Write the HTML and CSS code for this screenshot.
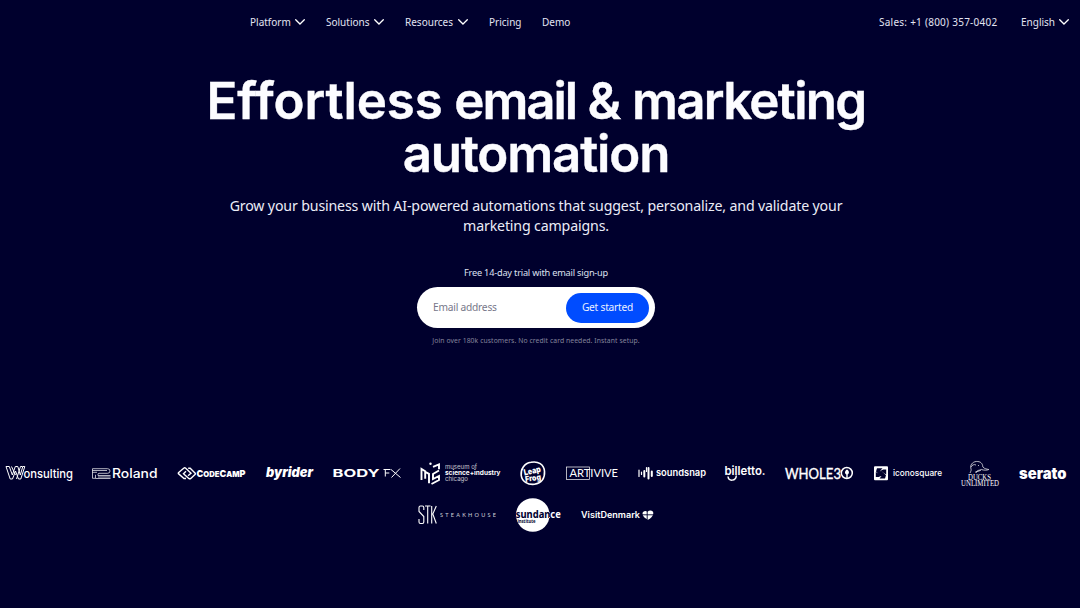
FILE: index.html
```html
<!DOCTYPE html>
<html lang="en">
<head>
<meta charset="utf-8">
<title>Effortless email &amp; marketing automation</title>
<link rel="stylesheet" href="styles.css">
</head>
<body>
<header class="topbar">
  <nav class="menu">
    <a class="item platform">Platform <svg class="chev" viewBox="0 0 10 6"><path d="M.7.8 5 5 9.300.8"/></svg></a>
    <a class="item solutions">Solutions <svg class="chev" viewBox="0 0 10 6"><path d="M.7.8 5 5 9.300.8"/></svg></a>
    <a class="item resources">Resources <svg class="chev" viewBox="0 0 10 6"><path d="M.7.8 5 5 9.300.8"/></svg></a>
    <a class="item pricing">Pricing</a>
    <a class="item demo">Demo</a>
  </nav>
  <div class="side">
    <a class="item sales">Sales: +1 (800) 357-0402</a>
    <a class="item lang">English <svg class="chev" viewBox="0 0 10 6"><path d="M.7.8 5 5 9.300.8"/></svg></a>
  </div>
</header>
<main class="hero">
  <h1 class="title"><span class="loose">Effortless</span> <span class="tight">email</span> &amp; <span class="snug">marketing</span><br>automation</h1>
  <p class="lead">Grow your business with AI-powered automations that suggest, personalize, and validate your<br>marketing campaigns.</p>
  <p class="trial">Free 14-day trial with email sign-up</p>
  <form class="signup"><span class="email">Email address</span><button class="cta" type="button">Get started</button></form>
  <p class="note">Join over 180k customers. No credit card needed. Instant setup.</p>
</main>
<section class="logos">
  <div class="row">
    <svg class="logo" width="68" height="34" viewBox="5 456 68 34">
      <path class="ln" stroke-linejoin="round" d="M6 466.500h3.300l3 8.500 3-8.500h2.500l2.500 8.500 2.500-8.500h2L20.800 479h-2.300l-3-8-3 8h-2.300zM11.500 466.500l4 8.500M16.500 479l4-12.500h2"/>
      <text class="inter m" x="23.500" y="478.300" font-size="12" textLength="49.500" lengthAdjust="spacingAndGlyphs">onsulting</text>
    </svg>
    <svg class="logo" width="66" height="34" viewBox="92 456 66 34">
      <path class="ln thin" d="M92.500 468.700h15q2.500 0 2.500 2.300t-2.500 2.300h-8.500q-1 0-1 1v1.200h12.500M92.500 470.500h14.500M92.500 472.300h4.500M92.500 468.700v9.600h3v-3.500M98 477h12.500M95.500 478.500h15"/>
      <text class="inter m" x="112" y="478" font-size="12.700" textLength="45.500" lengthAdjust="spacingAndGlyphs">Roland</text>
    </svg>
    <svg class="logo" width="69" height="34" viewBox="177 456 69 34">
      <path class="ln" stroke-width="1.400" d="M186 478.500h-2l-5.300-4.600q-.8-.7 0-1.500l5-4.200q1-.8 2 0l5.300 5-3 2.500M186 471.200l-2.500 2.500 5.300 4.700q1 .8 2 0l4.200-4q.8-.7 0-1.500l-4.800-4.700h-2"/>
      <text class="inter x" y="477" textLength="49" lengthAdjust="spacingAndGlyphs" font-size="8"><tspan x="196.500" font-size="9.500">C</tspan>ODE<tspan font-size="9.500">C</tspan>AM<tspan font-size="9.500">P</tspan></text>
    </svg>
    <svg class="logo" width="48" height="34" viewBox="265 456 48 34">
      <text class="inter x i" x="265" y="477" font-size="13.500" textLength="47" lengthAdjust="spacingAndGlyphs">byrider</text>
    </svg>
    <svg class="logo" width="68" height="34" viewBox="332 456 68 34">
      <text class="inter b" x="331.500" y="477" font-size="11" textLength="47" lengthAdjust="spacingAndGlyphs">BODY</text>
      <path class="ln" d="M382.500 469.500h7M384.300 469.500v7M384.300 473h4M390 469.500l9.500 8M399 468.500l-8.500 9"/>
    </svg>
    <svg class="logo" width="81" height="34" viewBox="419 456 81 34">
      <path class="ln heavy" d="M420.500 480v-11l3.700 2.300v7.500M424.200 471.800l3.800 2v9.500M430.500 484l7.500-4v-4l-6 3v-5l6-3.500M432 466.800l6-2.500v5"/>
      <circle class="fill" cx="429.500" cy="463.800" r="1.200"/>
      <text class="inter" x="444" y="469.300" font-size="6.500" textLength="32" lengthAdjust="spacingAndGlyphs" opacity=".75">museum of</text>
      <text class="inter b" x="444" y="475.300" font-size="6.500" textLength="55.500" lengthAdjust="spacingAndGlyphs">science+industry</text>
      <text class="inter" x="444" y="481.300" font-size="6.500" textLength="23" lengthAdjust="spacingAndGlyphs" opacity=".75">chicago</text>
    </svg>
    <svg class="logo" width="26" height="34" viewBox="520 456 26 34">
      <path class="ln" stroke-width="1.600" d="M531 462.300c7-1.500 13 2 13.500 9 .5 7-3 12-10 13-7 .7-12.500-3-13.300-9-.6-6 2.800-12 9.800-13z"/>
      <text class="inter x" x="524" y="473.800" font-size="8.500" textLength="17" lengthAdjust="spacingAndGlyphs" transform="rotate(-13 532 472)">Leap</text>
      <text class="inter x" x="525" y="480.800" font-size="8" textLength="16" lengthAdjust="spacingAndGlyphs" transform="rotate(-8 533 478)">Frog</text>
    </svg>
    <svg class="logo" width="53" height="34" viewBox="565 456 53 34">
      <rect class="ln thin" x="565.500" y="467" width="23" height="12.500"/>
      <text class="lato" x="568.500" y="477.300" font-size="11" textLength="48.500" lengthAdjust="spacingAndGlyphs">ARTIVIVE</text>
    </svg>
    <svg class="logo" width="68" height="34" viewBox="637 456 68 34">
      <path class="bars" d="M638 470v6.500M640.500 472v2.500M645.500 467.500v4"/><path class="bars wide" d="M643.300 471v5.500M647.500 468v10.500M650.800 471.500v4.500"/>
      <text class="inter sb" x="655" y="476.300" font-size="9.300" textLength="50" lengthAdjust="spacingAndGlyphs">soundsnap</text>
    </svg>
    <svg class="logo" width="41" height="34" viewBox="725 456 41 34">
      <text class="inter sb" x="724.500" y="475" font-size="12" textLength="41" lengthAdjust="spacingAndGlyphs">billetto.</text>
      <path class="ln" stroke-width="1.500" d="M728 476.500c.5 5 8 5 8.300-1"/>
    </svg>
    <svg class="logo" width="69" height="34" viewBox="785 456 69 34">
      <text class="lato outlined" x="785" y="478.500" font-size="15" textLength="56" lengthAdjust="spacingAndGlyphs">WHOLE3</text>
      <circle class="ln" stroke-width="1.500" cx="846.800" cy="473" r="5.500"/><path class="fill" d="M847 469.500c-2.500 1.500-2.500 4-.7 5v4h1.400v-4c1.800-1 1.800-3.500-.7-5z"/>
    </svg>
    <svg class="logo" width="68" height="34" viewBox="873 456 68 34">
      <rect class="fill" x="873" y="466.300" width="14" height="14" rx="1"/>
      <path class="cut" d="M876 468.300h5.500l-2 2.300-2 3.200-2.500-2.300zM885.200 469.500v5l-2.400-1.500-2.800-2.500 2.300-1zM884 478.500h-5.500l2-2.300 2-3.200 2.500 2.300zM874.800 477v-5l2.400 1.500 2.800 2.500-2.300 1zM880 470.500l3 3-3 3-3-3z"/>
      <text class="inter m" x="892" y="476.200" font-size="9" textLength="49" lengthAdjust="spacingAndGlyphs">iconosquare</text>
    </svg>
    <svg class="logo" width="38" height="34" viewBox="961 456 38 34">
      <path class="ln thin" d="M970 473c1-2 1.500-3 .8-5-.8-4 3-7 7-6.500 4 .3 5 3.500 5 5.500 2 2 4 2 6 2.500-2 1-5 .8-7.500 0-2 2-4 2-6 2.500M971 467c1-2 3-3 5-2M978 465.500h1M976 473c0-2 2-3 5-3"/>
      <text class="serif" x="968" y="479.500" font-size="7.300" textLength="23" lengthAdjust="spacingAndGlyphs">DUCKS</text>
      <text class="serif" x="961" y="485.700" font-size="7.300" textLength="38" lengthAdjust="spacingAndGlyphs">UNLIMITED</text>
    </svg>
    <svg class="logo" width="49" height="34" viewBox="1018 456 49 34">
      <text class="inter x" x="1019" y="478.500" font-size="15" textLength="47.500" lengthAdjust="spacingAndGlyphs">serato</text>
    </svg>
  </div>
  <div class="row">
    <svg class="logo" width="78" height="34" viewBox="418 498 78 34">
      <path class="ln" stroke-width="1.100" d="M423.800 510v-2.500q0-1.500-1.500-1.500h-1.800q-1.500 0-1.500 1.500v4l4.800 5v5.500q0 1.500-1.500 1.500h-1.800q-1.500 0-1.500-1.500v-3M425 506h5.500M427.700 506v17.500M431.700 506v17.500M436.300 506l-3.500 8 3.500 9.500"/>
      <text class="lato" x="440" y="517.300" font-size="5.500" textLength="56" opacity=".8">STEAKHOUSE</text>
    </svg>
    <svg class="logo" width="47" height="34" viewBox="515 498 47 34">
      <radialGradient id="ink" gradientUnits="userSpaceOnUse" cx="532.800" cy="515" r="16.800"><stop offset="1" stop-color="#00002d"/><stop offset="1" stop-color="#fff"/></radialGradient>
      <circle class="fill" cx="532.800" cy="515" r="16.800"/>
      <text class="noto b" fill="url(#ink)" x="515.800" y="518" font-size="10.500" textLength="45" lengthAdjust="spacingAndGlyphs">sundance</text>
      <text class="noto b dark" x="517.500" y="522.500" font-size="4.500" textLength="18" lengthAdjust="spacingAndGlyphs">institute</text>
    </svg>
    <svg class="logo" width="73" height="34" viewBox="581 498 73 34">
      <text class="inter sb" x="581" y="518" font-size="9" textLength="59" lengthAdjust="spacingAndGlyphs">VisitDenmark</text>
      <path class="fill" d="M648 519.800c-3-1.500-5.500-3.500-5.500-6s3-3.500 5-2c2-2 6-1.500 5.800 1.500-.2 3-2.800 5.500-5.300 6.500z"/><path class="cutline" d="M647.200 510.500v9M642 514.800h11.500"/>
    </svg>
  </div>
</section>
</body>
</html>
```
FILE: styles.css
```css
* { box-sizing: border-box; }
body { margin: 0; height: 608px; overflow: hidden; background: #00002d; color: #f7f8ff; font-family: "Noto Sans", sans-serif; }
p, h1 { margin: 0; white-space: nowrap; }
.topbar { display: flex; justify-content: space-between; height: 44px; padding: 0 11px 0 250px; align-items: center; }
.menu, .side { display: flex; align-items: center; }
.menu { gap: 21px; }
.side { gap: 24px; }
.item { display: flex; align-items: center; justify-content: space-between; font-size: 10px; line-height: 14px; white-space: nowrap; color: #e3e4f2; }
.platform { width: 55px; }
.solutions { width: 58px; }
.resources { width: 63px; }
.pricing { width: 32px; }
.demo { width: 27px; }
.sales { width: 118px; letter-spacing: .25px; }
.lang { width: 48px; }
.chev { width: 10px; height: 6px; fill: none; stroke: #fff; stroke-width: 1.3; stroke-linecap: round; }
.hero { width: 1072px; display: flex; flex-direction: column; align-items: center; text-align: center; padding-top: 31px; }
.title { font: 600 51px/52.5px Inter, sans-serif; letter-spacing: -1.12px; color: #fcfcff; -webkit-text-stroke: .4px #fcfcff; }
.loose { letter-spacing: -.1px; }
.tight { letter-spacing: -2.1px; }
.snug { letter-spacing: -1.7px; }
.lead { margin-top: 16px; font-size: 14.2px; letter-spacing: -.16px; line-height: 20px; color: #ebecf7; }
.trial { margin-top: 30px; font-size: 9.2px; letter-spacing: -.2px; line-height: 14px; color: #dfe0f0; }
.signup { display: flex; align-items: center; justify-content: space-between; width: 238px; height: 41px; margin-top: 7px; padding: 0 6px 0 16px; border-radius: 21px; background: #fff; }
.email { font-size: 10.2px; letter-spacing: -.22px; color: #77778a; padding-bottom: 1px; }
.cta { width: 83px; height: 30px; border: 0; border-radius: 15px; padding: 0 0 1px; background: #004cff; color: #edf1ff; font: 10.2px "Noto Sans", sans-serif; letter-spacing: -.22px; }
.note { margin-top: 7px; font-size: 6.8px; letter-spacing: .08px; line-height: 11px; color: #85859c; }
.logos { width: 1072px; margin-top: 110px; display: flex; flex-direction: column; gap: 8px; }
.row { display: flex; justify-content: center; gap: 19.25px; }
.logo { display: block; flex: none; fill: #fff; overflow: visible; }
.ln { fill: none; stroke: #fff; }
.thin { stroke-width: .7; }
.heavy { stroke-width: 1.9; }
.bars { fill: none; stroke: #fff; stroke-width: 1.2; stroke-linecap: round; }
.wide { stroke-width: 2; }
.fill { fill: #fff; }
.cut { fill: #00002d; }
.cutline { fill: none; stroke: #00002d; stroke-width: .9; }
.inter { font-family: Inter, sans-serif; }
.lato { font-family: Lato, sans-serif; }
.noto { font-family: "Noto Sans", sans-serif; }
.serif { font-family: "Liberation Serif", serif; }
.m { font-weight: 500; }
.sb { font-weight: 600; }
.b { font-weight: 700; }
.x { font-weight: 900; }
.i { font-style: italic; }
.dark { fill: #00002d; }
.outlined { stroke: #fff; stroke-width: .35; }
```
